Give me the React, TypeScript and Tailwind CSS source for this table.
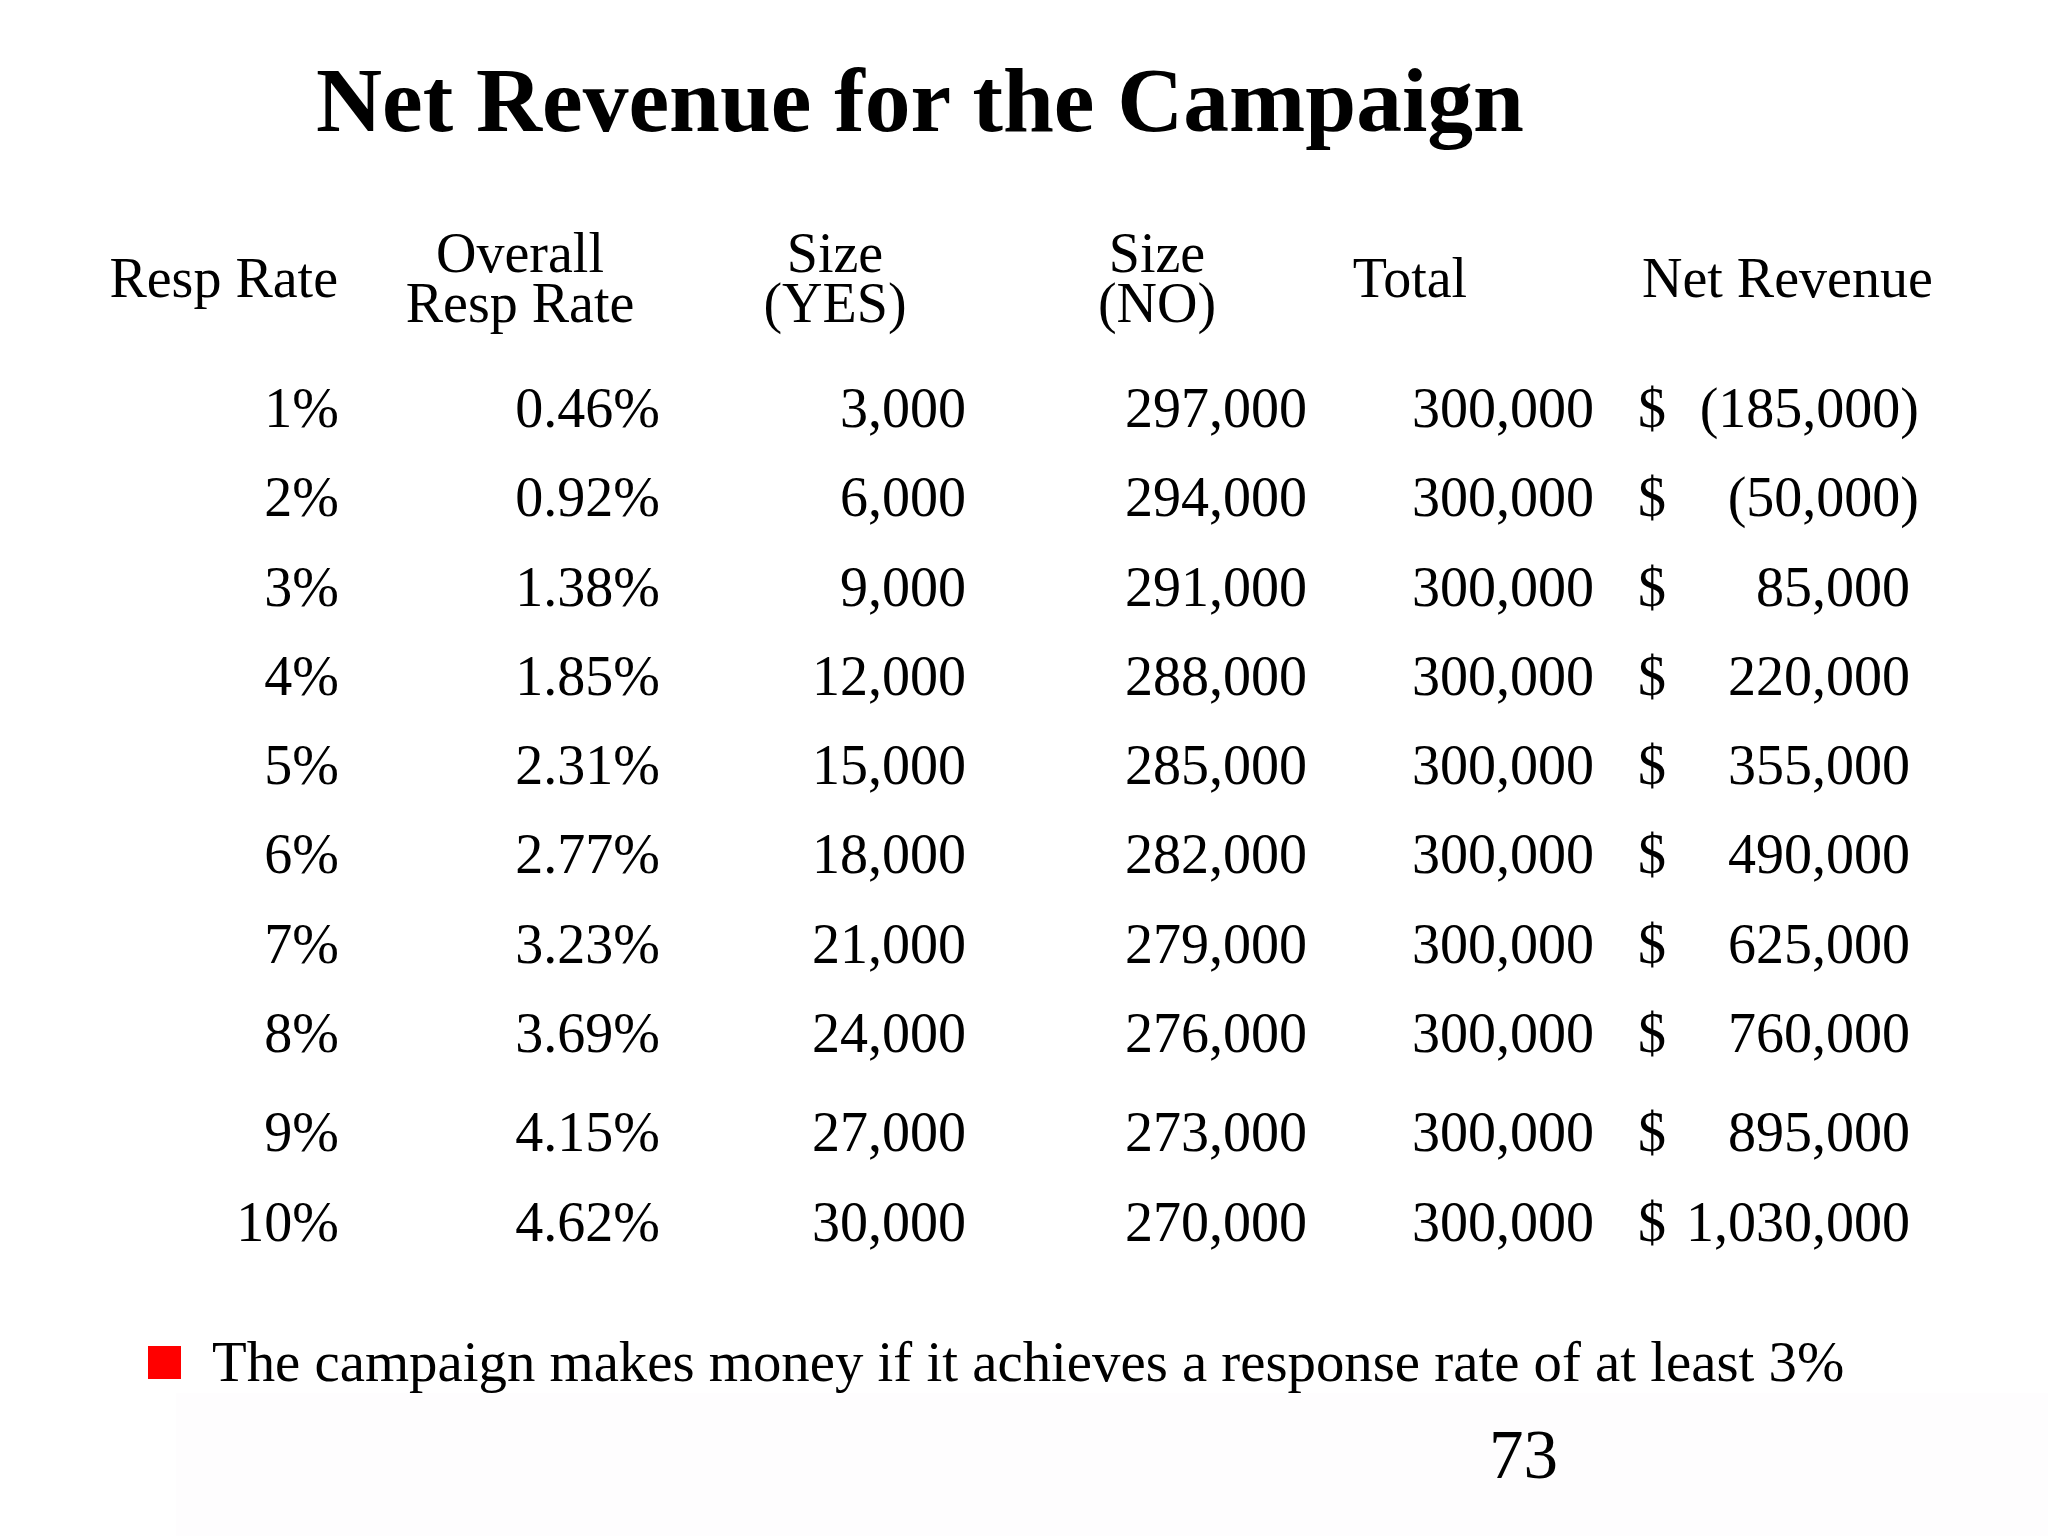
const rows: { rate: string; overall: string; yes: string; no: string; total: string; net: string; neg?: boolean; gap?: boolean }[] = [
  { rate: '1%', overall: '0.46%', yes: '3,000', no: '297,000', total: '300,000', net: '(185,000)', neg: true },
  { rate: '2%', overall: '0.92%', yes: '6,000', no: '294,000', total: '300,000', net: '(50,000)', neg: true },
  { rate: '3%', overall: '1.38%', yes: '9,000', no: '291,000', total: '300,000', net: '85,000' },
  { rate: '4%', overall: '1.85%', yes: '12,000', no: '288,000', total: '300,000', net: '220,000' },
  { rate: '5%', overall: '2.31%', yes: '15,000', no: '285,000', total: '300,000', net: '355,000' },
  { rate: '6%', overall: '2.77%', yes: '18,000', no: '282,000', total: '300,000', net: '490,000' },
  { rate: '7%', overall: '3.23%', yes: '21,000', no: '279,000', total: '300,000', net: '625,000' },
  { rate: '8%', overall: '3.69%', yes: '24,000', no: '276,000', total: '300,000', net: '760,000' },
  { rate: '9%', overall: '4.15%', yes: '27,000', no: '273,000', total: '300,000', net: '895,000', gap: true },
  { rate: '10%', overall: '4.62%', yes: '30,000', no: '270,000', total: '300,000', net: '1,030,000' },
]

export default function App() {
  return (
    <div className="flex h-[1536px] w-[2048px] flex-col overflow-hidden bg-white font-['Liberation_Serif','Times_New_Roman',serif] text-black">
      {/* Title */}
      <h1 className="pl-[316px] pt-[54px] text-[91.5px] font-bold leading-[92px]">
        Net Revenue for the Campaign
      </h1>

      {/* Column headers */}
      <div className="mt-[82px] grid grid-cols-[338px_364px_266px_378px_128px_1fr] items-center text-[56px] leading-[50px]">
        <div className="text-right">Resp Rate</div>
        <div className="text-center">
          Overall
          <br />
          Resp Rate
        </div>
        <div className="text-center">
          Size
          <br />
          (YES)
        </div>
        <div className="text-center">
          Size
          <br />
          (NO)
        </div>
        <div className="text-center">Total</div>
        <div className="pl-[168px] text-left">Net Revenue</div>
      </div>

      {/* Data rows */}
      <div className="mt-[36px] flex flex-col text-[56px] leading-[89.3px]">
        {rows.map((r) => (
          <div
            key={r.rate}
            className={`grid grid-cols-[339px_321px_306px_341px_287px_325px] ${r.gap ? 'mt-[10px]' : ''}`}
          >
            <div className="text-right">{r.rate}</div>
            <div className="text-right">{r.overall}</div>
            <div className="text-right">{r.yes}</div>
            <div className="text-right">{r.no}</div>
            <div className="text-right">{r.total}</div>
            <div className="flex pl-[44px]">
              <span>$</span>
              <span className={`flex-1 text-right ${r.neg ? '' : 'pr-[9px]'}`}>{r.net}</span>
            </div>
          </div>
        ))}
      </div>

      {/* Bullet */}
      <div className="mt-[64px] flex items-start text-[56.8px] leading-[62px]">
        <span className="ml-[148px] mt-[15px] size-[33px] shrink-0 bg-[#ff0000]" />
        <span className="ml-[31px]">The campaign makes money if it achieves a response rate of at least 3%</span>
      </div>

      {/* Footer with slide number */}
      <div className="ml-[176px] flex-1 bg-[#fefdfe] pl-[1313px] pt-[24px] text-[69px] leading-[76px]">
        73
      </div>
    </div>
  )
}
